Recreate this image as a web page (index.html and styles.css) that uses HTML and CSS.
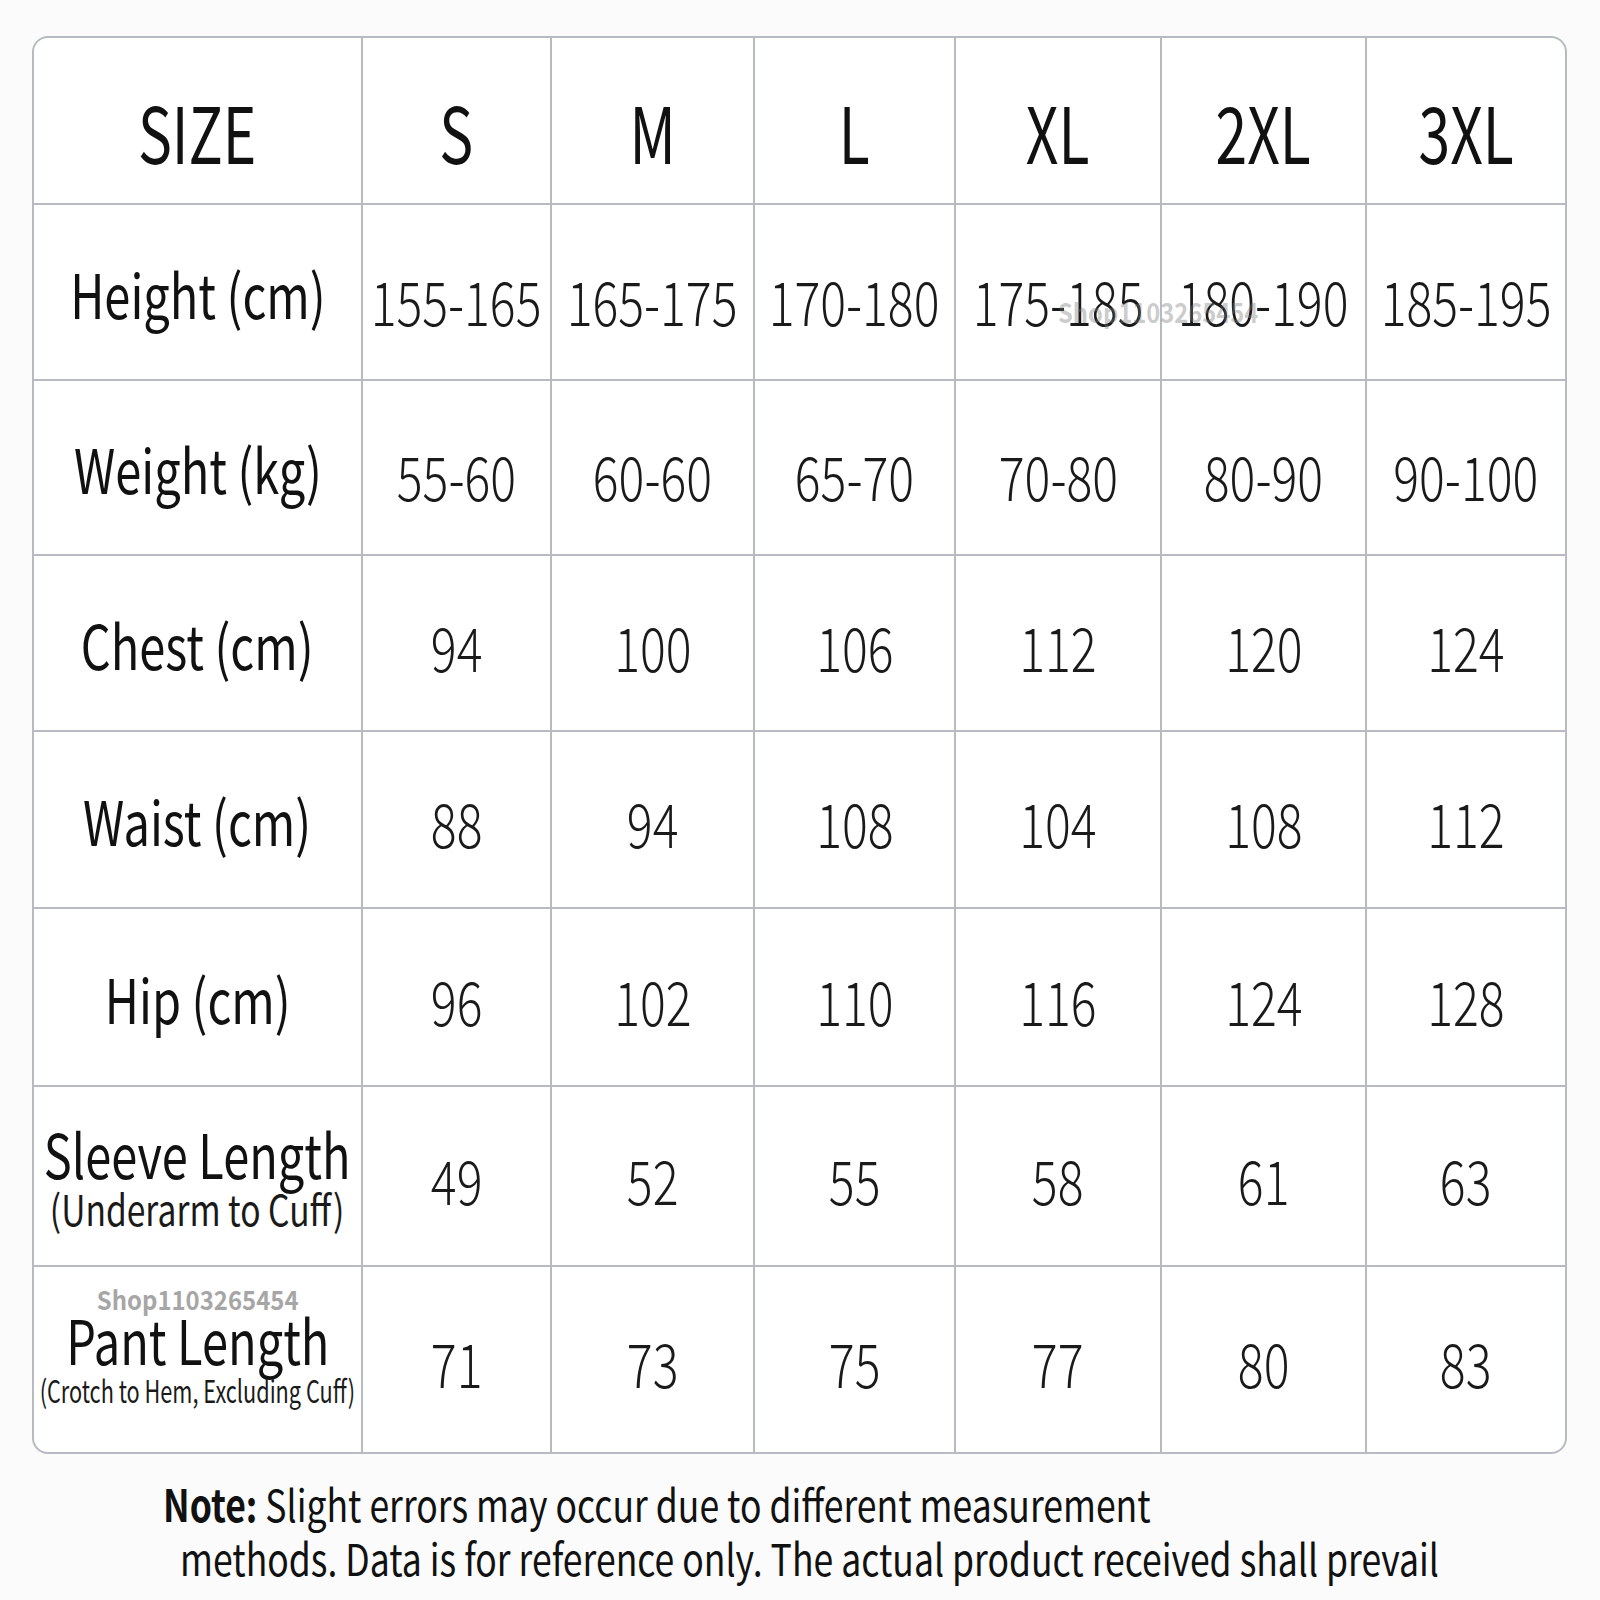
FILE: index.html
```html
<!DOCTYPE html>
<html lang="en">
<head>
<meta charset="utf-8">
<title>Size Chart</title>
<link rel="stylesheet" href="styles.css">
</head>
<body>
<main class="page">
  <div class="chart">
    <div class="cell head"><span class="t">SIZE</span></div>
    <div class="cell head"><span class="t">S</span></div>
    <div class="cell head"><span class="t">M</span></div>
    <div class="cell head"><span class="t">L</span></div>
    <div class="cell head"><span class="t">XL</span></div>
    <div class="cell head"><span class="t">2XL</span></div>
    <div class="cell head last"><span class="t">3XL</span></div>

    <div class="cell label"><span class="t">Height (cm)</span></div>
    <div class="cell num low"><span class="t">155-165</span></div>
    <div class="cell num low"><span class="t">165-175</span></div>
    <div class="cell num low"><span class="t">170-180</span></div>
    <div class="cell num low"><span class="t">175-185</span></div>
    <div class="cell num low"><span class="t">180-190</span></div>
    <div class="cell num low last"><span class="t">185-195</span></div>

    <div class="cell label"><span class="t">Weight (kg)</span></div>
    <div class="cell num low"><span class="t">55-60</span></div>
    <div class="cell num low"><span class="t">60-60</span></div>
    <div class="cell num low"><span class="t">65-70</span></div>
    <div class="cell num low"><span class="t">70-80</span></div>
    <div class="cell num low"><span class="t">80-90</span></div>
    <div class="cell num low last"><span class="t">90-100</span></div>

    <div class="cell label"><span class="t">Chest (cm)</span></div>
    <div class="cell num"><span class="t">94</span></div>
    <div class="cell num"><span class="t">100</span></div>
    <div class="cell num"><span class="t">106</span></div>
    <div class="cell num"><span class="t">112</span></div>
    <div class="cell num"><span class="t">120</span></div>
    <div class="cell num last"><span class="t">124</span></div>

    <div class="cell label"><span class="t">Waist (cm)</span></div>
    <div class="cell num"><span class="t">88</span></div>
    <div class="cell num"><span class="t">94</span></div>
    <div class="cell num"><span class="t">108</span></div>
    <div class="cell num"><span class="t">104</span></div>
    <div class="cell num"><span class="t">108</span></div>
    <div class="cell num last"><span class="t">112</span></div>

    <div class="cell label"><span class="t">Hip (cm)</span></div>
    <div class="cell num"><span class="t">96</span></div>
    <div class="cell num"><span class="t">102</span></div>
    <div class="cell num"><span class="t">110</span></div>
    <div class="cell num"><span class="t">116</span></div>
    <div class="cell num"><span class="t">124</span></div>
    <div class="cell num last"><span class="t">128</span></div>

    <div class="cell label stack">
      <span class="t">Sleeve Length</span>
      <span class="t sub">(Underarm to Cuff)</span>
    </div>
    <div class="cell num"><span class="t">49</span></div>
    <div class="cell num"><span class="t">52</span></div>
    <div class="cell num"><span class="t">55</span></div>
    <div class="cell num"><span class="t">58</span></div>
    <div class="cell num"><span class="t">61</span></div>
    <div class="cell num last"><span class="t">63</span></div>

    <div class="cell label stack pant bottom">
      <span class="mark">Shop1103265454</span>
      <span class="t">Pant Length</span>
      <span class="t sub small">(Crotch to Hem, Excluding Cuff)</span>
    </div>
    <div class="cell num bottom"><span class="t">71</span></div>
    <div class="cell num bottom"><span class="t">73</span></div>
    <div class="cell num bottom"><span class="t">75</span></div>
    <div class="cell num bottom"><span class="t">77</span></div>
    <div class="cell num bottom"><span class="t">80</span></div>
    <div class="cell num bottom last"><span class="t">83</span></div>

    <span class="watermark">Shop1103265454</span>
  </div>

  <div class="note">
    <p class="line"><span class="t"><b>Note:</b> Slight errors may occur due to different measurement</span></p>
    <p class="line second"><span class="t">methods. Data is for reference only. The actual product received shall prevail</span></p>
  </div>
</main>
</body>
</html>
```

FILE: styles.css
```css
* { box-sizing: border-box; }

html, body {
  margin: 0;
  padding: 0;
  background: #fbfbfc;
  font-family: "Noto Sans CJK SC", "Noto Sans", sans-serif;
  color: #111;
}

.page {
  width: 1600px;
  height: 1600px;
  padding: 36px 0 0 32px;
  overflow: hidden;
}

.chart {
  position: relative;
  width: 1535px;
  display: grid;
  grid-template-columns: 329px 189px 203px 201px 206px 205px 198px;
  grid-template-rows: 167px 176px 175px 176px 177px 178px 180px 185px;
  border: 2px solid #b7bbc1;
  border-radius: 16px;
  background: #ffffff;
  overflow: hidden;
}

.cell {
  display: flex;
  align-items: center;
  justify-content: center;
  border-right: 2px solid #b7bbc1;
  border-bottom: 2px solid #b7bbc1;
}

.cell.last { border-right: none; }
.cell.bottom { border-bottom: none; }

.t {
  display: inline-block;
  white-space: nowrap;
  transform: scaleX(0.79);
  transform-origin: center;
}

.head {
  font-size: 78px;
  font-weight: 400;
  line-height: 1;
  padding-top: 18px;
}

.head .t { transform: scaleX(0.73); }

.label {
  font-size: 61px;
  font-weight: 400;
  line-height: 1;
}

.label .t { transform: scaleX(0.77); }

.num {
  font-size: 61px;
  font-weight: 300;
  color: #1a1a1a;
  line-height: 1;
  padding-top: 4px;
}

.num.low { padding-top: 14px; }

.stack {
  flex-direction: column;
}

.stack .t { line-height: 1.02; }

.label .sub {
  font-size: 42px;
  color: #1a1a1a;
  transform: scaleX(0.8);
  margin-top: 2px;
}

.label .sub.small {
  font-size: 31px;
  transform: scaleX(0.7);
  margin-top: 4px;
}

.pant { padding-bottom: 28px; }

.mark {
  font-size: 26px;
  font-weight: 700;
  color: #a6a6a6;
  line-height: 1;
  margin-bottom: -4px;
  transform: scaleX(0.92);
}

.watermark {
  position: absolute;
  left: 1024px;
  top: 254px;
  font-size: 27px;
  font-weight: 700;
  color: rgba(120, 120, 120, 0.4);
  transform: scaleX(0.88);
  transform-origin: left;
  white-space: nowrap;
}

.note {
  padding-top: 22px;
}

.line {
  margin: 0;
  font-size: 44px;
  line-height: 54px;
  padding-left: 131px;
}

.line .t {
  transform-origin: left;
  transform: scaleX(0.808);
}

.line.second { padding-left: 148px; }

.line b { font-weight: 700; }
```
